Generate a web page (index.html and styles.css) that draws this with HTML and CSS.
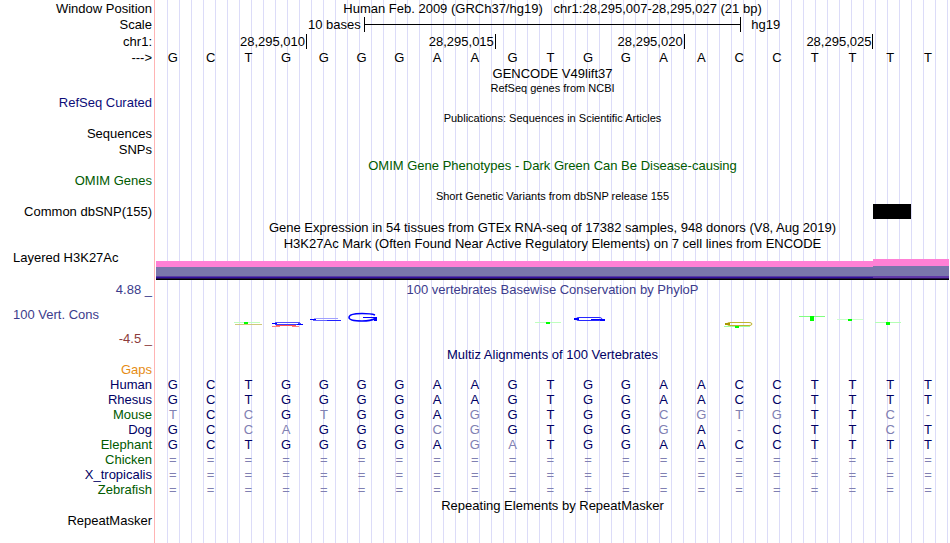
FILE: index.html
```html
<!DOCTYPE html>
<html lang="en">
<head>
    <meta charset="UTF-8">
    <meta name="viewport" content="width=device-width, initial-scale=1.0">
    <title>Human chr1:28,295,007-28,295,027</title>
    <link rel="stylesheet" href="styles.css">
</head>
<body>
    <main class="browser">
        <div class="row h16">
            <div class="label">Window Position</div>
            <h1 class="title">Human Feb. 2009 (GRCh37/hg19) &nbsp; chr1:28,295,007-28,295,027 (21 bp)</h1>
        </div>
        <div class="row h17">
            <div class="label">Scale</div>
            <div class="scale">
                <span class="scale-size">10 bases</span>
                <span class="scale-bar"></span>
                <span class="scale-db">hg19</span>
            </div>
        </div>
        <div class="row h17">
            <div class="label">chr1:</div>
            <div class="ruler">
                <span class="tick">28,295,010</span>
                <span class="tick">28,295,015</span>
                <span class="tick">28,295,020</span>
                <span class="tick">28,295,025</span>
            </div>
        </div>
        <table class="bases reference">
            <tbody id="reference"></tbody>
        </table>

        <div class="row h16"><h2 class="title">GENCODE V49lift37</h2></div>
        <div class="row h14"><h2 class="title small">RefSeq genes from NCBI</h2></div>
        <div class="row h15"><div class="label blue">RefSeq Curated</div></div>
        <div class="row h16"><h2 class="title small">Publications: Sequences in Scientific Articles</h2></div>
        <div class="row h15"><div class="label">Sequences</div></div>
        <div class="row h16"><div class="label">SNPs</div></div>
        <div class="row h16"><h2 class="title green">OMIM Gene Phenotypes - Dark Green Can Be Disease-causing</h2></div>
        <div class="row h15"><div class="label green">OMIM Genes</div></div>
        <div class="row h16"><h2 class="title small">Short Genetic Variants from dbSNP release 155</h2></div>
        <div class="row h15">
            <div class="label">Common dbSNP(155)</div>
            <div class="items"><span class="snp"></span></div>
        </div>
        <div class="row h17"><h2 class="title">Gene Expression in 54 tissues from GTEx RNA-seq of 17382 samples, 948 donors (V8, Aug 2019)</h2></div>
        <div class="row h14"><h2 class="title">H3K27Ac Mark (Often Found Near Active Regulatory Elements) on 7 cell lines from ENCODE</h2></div>

        <div class="row signal">
            <div class="label left">Layered H3K27Ac</div>
            <div class="layers">
                <span class="layer"></span>
                <span class="layer high"></span>
            </div>
        </div>

        <div class="row conservation">
            <div class="axis">
                <span class="label max">4.88 _</span>
                <span class="label left slate">100 Vert. Cons</span>
                <span class="label min">-4.5 _</span>
            </div>
            <div class="plot">
                <h2 class="title slate">100 vertebrates Basewise Conservation by PhyloP</h2>
                <svg class="logo" viewBox="0 0 793 50" preserveAspectRatio="none" aria-hidden="true">
                    <!-- position 3 -->
                    <rect x="78" y="25" width="26" height="1" fill="#bfffbf"/>
                    <rect x="88" y="25" width="4" height="2" fill="#0f0"/>
                    <rect x="79" y="27" width="27" height="1" fill="#cfc87a"/>
                    <!-- position 4 -->
                    <rect x="119" y="25" width="25" height="1" fill="#5050ff"/>
                    <rect x="116" y="26" width="5" height="1" fill="#00f"/>
                    <rect x="142" y="26" width="3" height="1" fill="#5050ff"/>
                    <rect x="119" y="27" width="28" height="1" fill="#3c3cff"/>
                    <rect x="141" y="27" width="6" height="1" fill="#00f"/>
                    <rect x="120" y="28" width="20" height="1" fill="#ff5050"/>
                    <rect x="116" y="29" width="8" height="1" fill="#ff8080"/>
                    <rect x="136" y="29" width="7" height="1" fill="#ff8080"/>
                    <!-- position 5 -->
                    <rect x="158" y="21" width="24" height="1" fill="#a0a0ff"/>
                    <rect x="154" y="22" width="6" height="1" fill="#00f"/>
                    <rect x="157" y="23" width="14" height="1" fill="#6464ff"/>
                    <rect x="171" y="23" width="14" height="1" fill="#2020ff"/>
                    <!-- position 6 -->
                    <path d="M219 18Q215 16.500 206 16.500Q193 16.500 193 20.500Q193 24 206 24Q215 24 219 21.500" fill="none" stroke="#00f" stroke-width="1.500"/>
                    <rect x="207" y="20" width="14" height="1" fill="#00f"/>
                    <rect x="218" y="20" width="3" height="4" fill="#00f"/>
                    <!-- position 11 -->
                    <rect x="379" y="25" width="26" height="1" fill="#bfffbf"/>
                    <rect x="390" y="25" width="4" height="2" fill="#0f0"/>
                    <!-- position 12 -->
                    <rect x="420" y="20.500" width="26" height="3" rx="3" fill="none" stroke="#2828ff"/>
                    <rect x="418" y="21" width="5" height="2" fill="#00f"/>
                    <rect x="435" y="22" width="14" height="1" fill="#00f"/>
                    <rect x="444" y="22" width="5" height="2" fill="#00f"/>
                    <!-- position 16 -->
                    <rect x="571" y="25.500" width="25" height="3" rx="3" fill="none" stroke="#c0b430"/>
                    <rect x="569" y="26" width="5" height="2" fill="#a89800"/>
                    <rect x="568" y="29" width="26" height="1" fill="#9fff9f"/>
                    <rect x="579" y="29" width="4" height="2" fill="#0f0"/>
                    <!-- positions 18 to 20 -->
                    <rect x="643" y="19" width="26" height="1" fill="#80ff80"/>
                    <rect x="654" y="19" width="4" height="5" fill="#0f0"/>
                    <rect x="681" y="22" width="26" height="1" fill="#ccffcc"/>
                    <rect x="692" y="22" width="4" height="2" fill="#0f0"/>
                    <rect x="719" y="25" width="26" height="1" fill="#b4ffb4"/>
                    <rect x="730" y="25" width="4" height="3" fill="#0f0"/>
                </svg>
            </div>
        </div>

        <div class="row h15"><h2 class="title navy">Multiz Alignments of 100 Vertebrates</h2></div>
        <div class="row h15"><div class="label orange">Gaps</div></div>
        <table class="bases alignment">
            <tbody id="alignment"></tbody>
        </table>

        <div class="row h16"><h2 class="title">Repeating Elements by RepeatMasker</h2></div>
        <div class="row h14"><div class="label">RepeatMasker</div></div>
    </main>

    <script>
        const human = 'GCTGGGGAAGTGGAACCTTTT';
        const species = [
            { name: 'Human', color: 'navy', bases: human },
            { name: 'Rhesus', color: 'navy', bases: human },
            { name: 'Mouse', color: 'green', bases: 'TCCGTGGAGGTGGCGTGTTC-' },
            { name: 'Dog', color: 'navy', bases: 'GCCAGGGCGGTGGGA-CTTCT' },
            { name: 'Elephant', color: 'green', bases: 'GCTGGGGAGATGGAACCTTTT' },
            { name: 'Chicken', color: 'green', bases: '='.repeat(21) },
            { name: 'X_tropicalis', color: 'navy', bases: '='.repeat(21) },
            { name: 'Zebrafish', color: 'green', bases: '='.repeat(21) }
        ];

        function addRow(tbody, name, color, bases) {
            const row = tbody.insertRow();
            const head = document.createElement('th');
            head.scope = 'row';
            head.className = 'label ' + color;
            head.textContent = name;
            row.appendChild(head);

            for (let i = 0; i < bases.length; i++) {
                const cell = row.insertCell();
                cell.textContent = bases[i];
                // Bases that differ from human are drawn lighter
                if (bases[i] !== human[i]) {
                    cell.className = 'diff';
                }
            }
        }

        addRow(document.getElementById('reference'), '--->', '', human);
        species.forEach(s => addRow(document.getElementById('alignment'), s.name, s.color, s.bases));
    </script>
</body>
</html>
```
FILE: styles.css
```css
* {
    box-sizing: border-box;
}

body {
    margin: 0;
    background-color: #fff;
    color: #000;
    font-family: "Liberation Sans", Arial, sans-serif;
    font-size: 13px;
}

.browser {
    min-height: 100vh;
    padding-right: 1px;
    background-image:
        linear-gradient(#ffb4b4, #ffb4b4),
        repeating-linear-gradient(to right, #dcdcf8 0, #dcdcf8 1px, transparent 1px, transparent 12px);
    background-size: 1px 100%, auto;
    background-position: 154px 0, 167px 0;
    background-repeat: no-repeat;
}

.row {
    display: grid;
    grid-template-columns: 156px 1fr;
    line-height: 15px;
    align-items: center;
}

.h14 { height: 14px; }
.h15 { height: 15px; }
.h16 { height: 16px; }
.h17 { height: 17px; }

.label {
    padding-right: 4px;
    text-align: right;
    font-weight: normal;
    white-space: nowrap;
}

.label.left {
    padding-left: 13px;
    text-align: left;
}

.title {
    grid-column: 2;
    margin: 0;
    font-size: 13px;
    font-weight: normal;
    text-align: center;
    white-space: nowrap;
}

.title.small {
    font-size: 11px;
}

.navy { color: #000064; }
.blue { color: #0c0c78; }
.green { color: #005a00; }
.slate { color: #3c3c8c; }
.orange { color: #e68c14; }

/* Scale and ruler */
.scale {
    display: grid;
    grid-template-columns: 11fr 20fr 11fr;
    align-items: center;
}

.scale-size {
    padding-right: 3px;
    text-align: right;
}

.scale-bar {
    height: 15px;
    border: solid #000;
    border-width: 0 1px;
    background: linear-gradient(#000, #000) center / 100% 1px no-repeat;
}

.scale-db {
    padding-left: 10px;
}

.ruler {
    display: grid;
    grid-template-columns: 4fr 5fr 5fr 5fr 2fr;
}

.tick {
    border-right: 1px solid #000;
    padding-right: 1px;
    text-align: right;
}

/* Base tables */
.bases {
    width: 100%;
    table-layout: fixed;
    border-collapse: collapse;
    line-height: 15px;
}

.bases th {
    width: 156px;
    padding: 0 4px 0 0;
}

.bases td {
    padding: 0 4px 0 0;
    text-align: center;
}

.alignment td {
    color: #000064;
}

.alignment .diff {
    color: #8080b2;
}

/* Tracks */
.items {
    display: grid;
    grid-template-columns: repeat(21, 1fr);
}

.snp {
    grid-column: 20;
    height: 15px;
    background-color: #000;
}

.signal {
    height: 30px;
    align-items: start;
}

.layers {
    display: grid;
    grid-template-columns: 19fr 2fr;
    align-items: end;
    height: 30px;
}

.layer {
    height: 19px;
    background: linear-gradient(#ff80d5 6px, #7a76ac 6px, #7a76ac 15px, #5a3ca0 15px, #5a3ca0 16px, #3010a0 16px, #3010a0 17px, #281050 17px, #281050 18px, #000 18px);
}

.layer.high {
    height: 21px;
    background: linear-gradient(#ff80d5 7px, #7a76ac 7px, #7a76ac 17px, #6038a8 17px, #6038a8 19px, #281050 19px, #281050 20px, #000 20px);
}

.conservation {
    padding-top: 2px;
    align-items: stretch;
}

.axis {
    display: flex;
    flex-direction: column;
    justify-content: space-between;
    padding-bottom: 1px;
}

.max { color: #3c3c8c; }
.min { color: #8c3c3c; }

.logo {
    display: block;
    width: 100%;
    height: 50px;
}
```
